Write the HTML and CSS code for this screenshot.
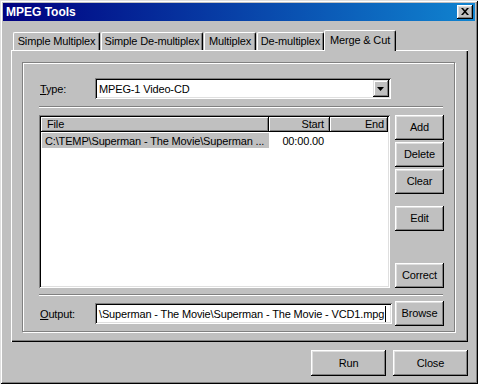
FILE: index.html
```html
<!DOCTYPE html>
<html>
<head>
<meta charset="utf-8">
<link rel="stylesheet" href="styles.css">
</head>
<body>
<div class="window">
  <div class="titlebar">
    <span class="title">MPEG Tools</span>
    <div class="tb-close"><svg width="8" height="7" viewBox="0 0 8 7"><path d="M0 0h2l2 2.3L6 0h2L5 3.5 8 7H6L4 4.7 2 7H0l3-3.5z" fill="#000"/></svg></div>
  </div>
  <div class="body">
    <div class="tabs">
      <div class="tab t1">Simple Multiplex</div>
      <div class="tab t2">Simple De-multiplex</div>
      <div class="tab t3">Multiplex</div>
      <div class="tab t4">De-multiplex</div>
      <div class="tab active">Merge &amp; Cut</div>
    </div>
    <div class="panel">
      <div class="group">
        <div class="type-row">
          <span class="lbl"><u>T</u>ype:</span>
          <div class="combo">
            <span class="combo-text">MPEG-1 Video-CD</span>
            <span class="combo-btn"><svg width="7" height="4" viewBox="0 0 7 4"><path d="M0 0h7L3.5 4z" fill="#000"/></svg></span>
          </div>
        </div>
        <div class="sep"></div>
        <div class="list-area">
          <div class="listview">
            <div class="lv-head">
              <div class="lv-col c1">File</div>
              <div class="lv-col c2">Start</div>
              <div class="lv-col c3">End</div>
            </div>
            <div class="lv-row">
              <div class="lv-cell c1"><span class="sel">C:\TEMP\Superman - The Movie\Superman ...</span></div>
              <div class="lv-cell c2">00:00.00</div>
              <div class="lv-cell c3"></div>
            </div>
          </div>
          <div class="side-btns">
            <div class="btn">Add</div>
            <div class="btn gap2">Delete</div>
            <div class="btn gap2">Clear</div>
            <div class="btn gap-edit">Edit</div>
            <div class="btn gap-auto">Correct</div>
          </div>
        </div>
        <div class="sep sep2"></div>
        <div class="out-row">
          <span class="lbl"><u>O</u>utput:</span>
          <div class="field"><span class="field-text">\Superman - The Movie\Superman - The Movie - VCD1.mpg</span><span class="caret"></span></div>
          <div class="btn browse">Browse</div>
        </div>
      </div>
    </div>
    <div class="footer">
      <div class="btn wide">Run</div>
      <div class="btn wide">Close</div>
    </div>
  </div>
</div>
</body>
</html>
```

FILE: styles.css
```css
* { box-sizing: border-box; }
html, body { margin: 0; padding: 0; }
body {
  width: 478px;
  height: 384px;
  overflow: hidden;
  background: #c0c0c0;
  font-family: "Liberation Sans", Arial, sans-serif;
  font-size: 11px;
  letter-spacing: -0.15px;
  color: #000;
}
.window {
  width: 478px;
  height: 384px;
  background: #c0c0c0;
  padding: 3px;
  box-shadow: inset 1px 1px #dfdfdf, inset -1px -1px #000, inset 2px 2px #fff, inset -2px -2px #808080;
  display: flex;
  flex-direction: column;
}
.titlebar {
  height: 18px;
  flex: none;
  background: linear-gradient(to right, #000080, #1084d0);
  display: flex;
  align-items: center;
  justify-content: space-between;
  padding: 0 2px 0 3px;
}
.title {
  color: #fff;
  font-weight: bold;
  font-size: 12px;
  letter-spacing: 0;
}
.tb-close {
  width: 16px;
  height: 14px;
  background: #c0c0c0;
  box-shadow: inset -1px -1px #000, inset 1px 1px #fff, inset -2px -2px #808080, inset 2px 2px #dfdfdf;
  display: flex;
  align-items: center;
  justify-content: center;
  padding: 0 1px 1px 0;
}
.tb-close svg { display: block; }
.body {
  flex: 1;
  padding: 9px 7px 0 8px;
  display: flex;
  flex-direction: column;
}
.tabs {
  height: 20px;
  flex: none;
  display: flex;
  gap: 1px;
  padding-left: 2px;
}
.tab {
  margin-top: 2px;
  height: 18px;
  border-left: 1px solid #fff;
  border-top: 1px solid #fff;
  border-right: 1px solid #000;
  border-radius: 2px 2px 0 0;
  box-shadow: inset -1px 0 #808080;
  background: #c0c0c0;
  display: flex;
  align-items: center;
  justify-content: center;
  white-space: nowrap;
  padding-bottom: 1px;
}
.t1 { width: 87px; }
.t2 { width: 102px; }
.t3 { width: 52px; }
.t4 { width: 67px; }
.tab.active {
  width: 72px;
  margin-top: 0;
  margin-left: -1px;
  height: 21px;
  position: relative;
  z-index: 1;
  padding-bottom: 3px;
}
.panel {
  height: 292px;
  flex: none;
  padding: 12px 13px 10px 11px;
  box-shadow: inset 1px 1px #fff, inset -1px -1px #000, inset -2px -2px #808080;
}
.group {
  height: 270px;
  width: 433px;
  border: 1px solid #808080;
  box-shadow: inset 1px 1px #fff, 1px 1px #fff;
  padding: 15px 10px 5px 16px;
  display: flex;
  flex-direction: column;
}
.lbl {
  width: 56px;
  flex: none;
  padding-left: 1px;
  white-space: nowrap;
}
.type-row {
  height: 21px;
  flex: none;
  display: flex;
  align-items: center;
}
.combo {
  width: 296px;
  height: 21px;
  background: #fff;
  box-shadow: inset 1px 1px #808080, inset -1px -1px #fff, inset 2px 2px #000, inset -2px -2px #dfdfdf;
  display: flex;
  align-items: center;
  padding: 2px;
}
.combo-text {
  flex: 1;
  padding-left: 2px;
}
.combo-btn {
  width: 16px;
  height: 17px;
  background: #c0c0c0;
  box-shadow: inset -1px -1px #000, inset 1px 1px #dfdfdf, inset -2px -2px #808080, inset 2px 2px #fff;
  display: flex;
  align-items: center;
  justify-content: center;
  padding: 1px 1px 0 0;
}
.combo-btn svg { display: block; }
.sep {
  height: 2px;
  flex: none;
  margin-top: 7px;
  border-top: 1px solid #808080;
  border-bottom: 1px solid #fff;
  margin-right: 1px;
}
.sep2 { margin-top: 6px; }
.list-area {
  height: 173px;
  flex: none;
  margin-top: 7px;
  display: flex;
  gap: 5px;
}
.listview {
  width: 351px;
  height: 173px;
  background: #fff;
  padding: 2px;
  box-shadow: inset 1px 1px #808080, inset -1px -1px #fff, inset 2px 2px #000, inset -2px -2px #dfdfdf;
  overflow: hidden;
}
.lv-head {
  display: grid;
  grid-template-columns: 228px 61px 1fr;
  height: 15px;
}
.lv-col {
  background: #c0c0c0;
  box-shadow: inset -1px -1px #000, inset 1px 1px #fff, inset -2px -2px #808080;
  display: flex;
  align-items: center;
  padding-bottom: 1px;
  white-space: nowrap;
}
.lv-col.c1 { padding-left: 6px; }
.lv-col.c2 { justify-content: flex-end; padding-right: 6px; }
.lv-col.c3 { justify-content: flex-end; padding-right: 4px; }
.lv-row {
  display: grid;
  grid-template-columns: 228px 61px 1fr;
  height: 15px;
  margin-top: 1px;
}
.lv-cell {
  display: flex;
  align-items: center;
  white-space: nowrap;
  overflow: hidden;
}
.lv-cell.c1 { padding-left: 1px; }
.sel {
  flex: 1;
  height: 15px;
  background: #c0c0c0;
  display: flex;
  align-items: center;
  padding-left: 3px;
  overflow: hidden;
}
.lv-cell.c2 { justify-content: flex-end; padding-right: 6px; }
.side-btns {
  width: 49px;
  display: flex;
  flex-direction: column;
}
.btn {
  height: 25px;
  flex: none;
  background: #c0c0c0;
  box-shadow: inset -1px -1px #000, inset 1px 1px #fff, inset -2px -2px #808080, inset 2px 2px #dfdfdf;
  display: flex;
  align-items: center;
  justify-content: center;
  white-space: nowrap;
  padding-bottom: 1px;
}
.gap2 { margin-top: 2px; }
.gap-edit { margin-top: 12px; }
.gap-auto { margin-top: auto; }
.out-row {
  height: 25px;
  flex: none;
  margin-top: 5px;
  display: flex;
  align-items: center;
}
.field {
  width: 297px;
  height: 21px;
  background: #fff;
  box-shadow: inset 1px 1px #808080, inset -1px -1px #fff, inset 2px 2px #000, inset -2px -2px #dfdfdf;
  display: flex;
  align-items: center;
  justify-content: flex-start;
  padding: 0 2px 0 4px;
  overflow: hidden;
  white-space: nowrap;
}
.field-text { flex: none; }
.caret {
  flex: none;
  width: 1px;
  height: 16px;
  background: #000;
  margin-left: 1px;
}
.browse {
  width: 49px;
  margin-left: 3px;
}
.footer {
  margin-top: 8px;
  display: flex;
  justify-content: flex-end;
  gap: 7px;
}
.wide {
  width: 75px;
  height: 26px;
}
```
